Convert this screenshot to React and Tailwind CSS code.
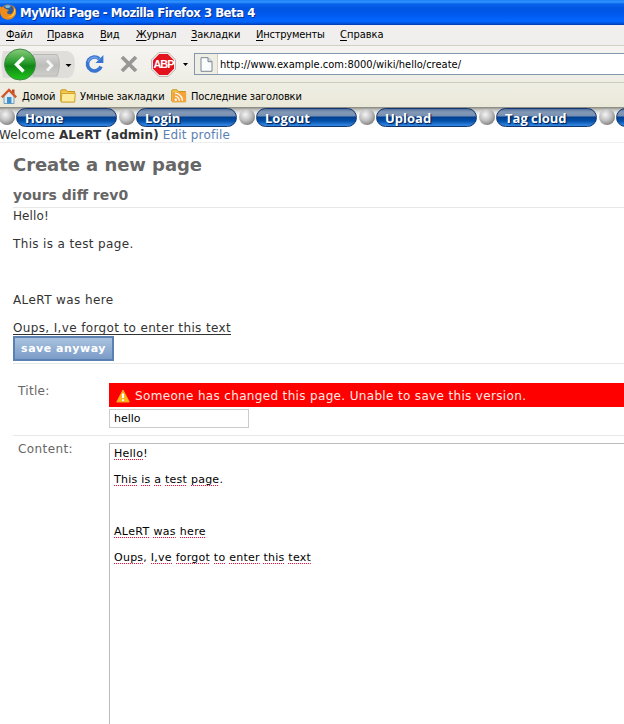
import React from "react";

const menu = [
  ["Ф", "айл", "w-[41px] tracking-[-0.2px]"],
  ["П", "равка", "w-[53px] tracking-[-0.1px]"],
  ["В", "ид", "w-[36px] tracking-[-0.2px]"],
  ["Ж", "урнал", "w-[55px] tracking-[-0.2px]"],
  ["З", "акладки", "w-[65px] tracking-[-0.1px]"],
  ["И", "нструменты", "w-[84px] tracking-[-0.2px]"],
  ["С", "правка", "w-[60px] tracking-[0px]"],
];

const tabs = ["Home", "Login", "Logout", "Upload", "Tag cloud", ""];

function FirefoxIcon() {
  return (
    <svg className="h-[18px] w-[17px] shrink-0" viewBox="0 0 17 18">
      <circle cx="8" cy="9" r="7.6" fill="#e87511" />
      <circle cx="8.3" cy="7.2" r="5.4" fill="#2a5c9e" />
      <path d="M5 3 Q8 1 11 3 L9 5 L6 5Z" fill="#75bde0" />
      <path d="M0 3 Q1 5 3 4 L6 6 L9 7 L7 9 Q7 12 11 11 Q14 9 14 5 L12 2 Q17 5 16 11 Q13 17 7 16.5 Q0 15 0 8Z" fill="#ee8c1b" />
      <path d="M14 5 Q16 8 14 12 Q11 15 7 14 Q12 14 14 9Z" fill="#ffd34e" />
    </svg>
  );
}

function BackForward() {
  return (
    <svg className="h-[34px] w-[76px] shrink-0" viewBox="0 0 76 34">
      <defs>
        <linearGradient id="back" x1="0" y1="0" x2="0" y2="1">
          <stop offset="0" stopColor="#8acb7c" />
          <stop offset=".42" stopColor="#2d9f30" />
          <stop offset=".55" stopColor="#118516" />
          <stop offset="1" stopColor="#20c71b" />
        </linearGradient>
        <linearGradient id="fwd" x1="0" y1="0" x2="0" y2="1">
          <stop offset="0" stopColor="#d6d6d4" />
          <stop offset=".5" stopColor="#bdbdbb" />
          <stop offset="1" stopColor="#cececb" />
        </linearGradient>
      </defs>
      <path d="M3 4 H67 Q75 5 75 17 Q75 29 68 31 H3 Q0 17 3 4Z" fill="#dfdedb" />
      <path d="M33 7.5 H57 Q62 17 57 29 H33Z" fill="url(#fwd)" stroke="#b8b8b6" />
      <circle cx="20" cy="17.5" r="15.5" fill="url(#back)" stroke="#43894a" />
      <path d="M23.5 10.5 L16.5 17.5 L23.5 24.5" fill="none" stroke="#fff" strokeWidth="3.4" />
      <path d="M47 13.5 L51.8 18.5 L47 23.5" fill="none" stroke="#f6f6f6" strokeWidth="2.8" />
      <path d="M65.5 17 H71.5 L68.5 20Z" fill="#000" />
    </svg>
  );
}

function ReloadIcon() {
  return (
    <svg className="h-[20px] w-[20px] shrink-0" viewBox="0 0 20 20">
      <path d="M14.2 4.8 A7 7 0 1 0 16 12.5" fill="none" stroke="#3a75d2" strokeWidth="3.6" />
      <path d="M18.4 1 V9 H10.5Z" fill="#3a75d2" />
      <path d="M13 4.4 A6.6 6.6 0 0 0 3 8" fill="none" stroke="#6ea3ec" strokeWidth="1.3" />
    </svg>
  );
}

function StopIcon() {
  return (
    <svg className="h-[18px] w-[18px] shrink-0" viewBox="0 0 18 18">
      <path d="M2 2 L16 16 M16 2 L2 16" stroke="#979795" strokeWidth="3.8" />
    </svg>
  );
}

function AbpIcon() {
  return (
    <span className="grid h-[25px] w-[25px] shrink-0 place-items-center">
      <svg className="col-start-1 row-start-1 h-[25px] w-[25px]" viewBox="0 0 25 25">
        <path d="M7.7 .7 H17.3 L24.3 7.7 V17.3 L17.3 24.3 H7.7 L.7 17.3 V7.7Z" fill="#fff" stroke="#b4a4a4" />
        <path d="M8.2 2 H16.8 L23 8.2 V16.8 L16.8 23 H8.2 L2 16.8 V8.2Z" fill="#e3131d" />
      </svg>
      <span className="col-start-1 row-start-1 font-['Liberation_Sans',sans-serif] text-[11px] leading-none font-bold tracking-[-1px] text-white">ABP</span>
    </span>
  );
}

function PageIcon() {
  return (
    <svg className="h-[15px] w-[13px]" viewBox="0 0 13 15">
      <path d="M1 .7 H8 L12 4.7 V14.3 H1Z" fill="#fbfcfd" stroke="#7c8791" />
      <path d="M8 .7 V4.7 H12" fill="#d6dde3" stroke="#7c8791" />
    </svg>
  );
}

function HouseIcon() {
  return (
    <svg className="h-[16px] w-[16px] shrink-0" viewBox="0 0 16 16">
      <path d="M3 8 L8 3 L13 8 V15.5 H3Z" fill="#dcebf6" stroke="#75a0bd" />
      <path d="M11 1.5 H13.5 V6 H11Z" fill="#b94d24" />
      <path d="M.8 9.3 L8 2 L15.2 9.3" fill="none" stroke="#d4582b" strokeWidth="2.4" />
      <path d="M6 9 H10.4 V15.5 H6Z" fill="#3e91cc" />
    </svg>
  );
}

function FolderIcon({ feed }) {
  return (
    <svg className="h-[14px] w-[16px] shrink-0" viewBox="0 0 16 14">
      <path d="M.7 12 V1.6 Q.7 .8 2 .8 H6 L7.5 2.5 H14.6 V12.8 H1.5Z" fill="#f3c64c" stroke="#c6981f" />
      {feed ? (
        <g>
          <path d="M1.5 3 H15 V13 H1.5Z" fill="#f6a43a" />
          <circle cx="4.8" cy="10.8" r="1.2" fill="#fff" />
          <path d="M4 7.2 A4.5 4.5 0 0 1 8.4 11.8 M4 4.2 A7.5 7.5 0 0 1 11.4 11.8" fill="none" stroke="#fff" strokeWidth="1.3" />
        </g>
      ) : (
        <path d="M1.8 4.5 H15.3 L14.5 13 H1.2Z" fill="#fdec9c" stroke="#d2a42e" />
      )}
    </svg>
  );
}

function WarningIcon() {
  return (
    <svg className="h-[14px] w-[14px] shrink-0" viewBox="0 0 14 14">
      <path d="M7 1 L13.3 13 H.7Z" fill="#ffb51c" stroke="#f9a51a" strokeLinejoin="round" />
      <path d="M6 4.5 H8 V9 H6Z M6 10.3 H8 V12 H6Z" fill="#fff" />
    </svg>
  );
}

function Misspelled({ text }) {
  return text.split(" ").map((word, i) => {
    const bare = word.replace(/[.,!]$/, "");
    return (
      <React.Fragment key={i}>
        {i > 0 && " "}
        <span className="bg-[repeating-linear-gradient(90deg,#d81b45_0px,#d81b45_1px,#fbe3e8_1px,#fbe3e8_2px)] bg-[length:100%_1px] bg-bottom bg-no-repeat">{bare}</span>
        {word.slice(bare.length)}
      </React.Fragment>
    );
  });
}

export default function App() {
  return (
    <div className="flex h-[724px] w-[624px] flex-col overflow-hidden bg-white whitespace-nowrap">
      <header className="flex shrink-0 flex-col font-['DejaVu_Sans_Condensed','DejaVu_Sans',sans-serif] text-[11px] text-black">
        <div className="flex h-[25px] items-center gap-[3px] bg-[linear-gradient(180deg,#1c7ef6_0px,#3395ff_2px,#0a62ea_4px,#0054e2_9px,#005cf2_16px,#0267ff_21px,#0058e4_23px,#0038b0_25px)] pb-[1px]">
          <FirefoxIcon />
          <span className="text-[13px] leading-none font-bold tracking-[-0.48px] text-white [text-shadow:1px_1px_0_#0a2f8a]">MyWiki Page - Mozilla Firefox 3 Beta 4</span>
        </div>
        <nav className="flex h-[21px] items-center border-b border-[#d2cfc3] bg-[#f0efee] pt-[1px] pl-[6px]">
          {menu.map(([key, rest, cls]) => (
            <span key={key} className={cls}>
              <span className="underline underline-offset-2">{key}</span>
              {rest}
            </span>
          ))}
        </nav>
        <div className="flex h-[37px] items-center border-b border-[#cfccbd] bg-[linear-gradient(180deg,#f5f4f2,#eeede4)]">
          <BackForward />
          <span className="w-[9px]" />
          <ReloadIcon />
          <span className="w-[15px]" />
          <StopIcon />
          <span className="w-[13px]" />
          <AbpIcon />
          <span className="w-[7px]" />
          <svg className="h-[3px] w-[5px]" viewBox="0 0 5 3"><path d="M0 0 H5 L2.5 3Z" /></svg>
          <span className="w-[6px]" />
          <div className="flex h-[22px] flex-1 items-center border-y border-l border-[#8397ad] bg-white">
            <span className="flex h-[20px] w-[23px] items-center justify-center border-r border-[#d4d0bd] bg-[#efeee4]"><PageIcon /></span>
            <span className="pt-[2px] pl-[2px] text-[11px] tracking-[0.02px]">http://www.example.com:8000/wiki/hello/create/</span>
          </div>
        </div>
        <div className="flex h-[24px] items-center bg-[linear-gradient(180deg,#efeee4,#eae8d8)] pt-[3px]">
          <span className="w-[1px]" />
          <span className="pb-[2px]"><HouseIcon /></span>
          <span className="w-[43px] pt-[1px] pl-[5px] tracking-[-0.1px]">Домой</span>
          <span className="pb-[2px]"><FolderIcon /></span>
          <span className="w-[95px] pt-[1px] pl-[4px] tracking-[-0.1px]">Умные закладки</span>
          <span className="pb-[2px]"><FolderIcon feed /></span>
          <span className="pt-[1px] pl-[4px] tracking-[-0.15px]">Последние заголовки</span>
        </div>
      </header>

      <nav className="flex h-[20px] shrink-0 overflow-hidden bg-[linear-gradient(180deg,#85857c,#c8c8c4_3px,#fff_8px)]">
        {tabs.map((label, i) => (
          <div key={i} className={i === 0 ? "flex w-[119px] shrink-0 items-center" : "flex w-[120px] shrink-0 items-center"}>
            <span className={i === 0 ? "-ml-[1px] h-[16px] w-[16px] shrink-0 rounded-full bg-[radial-gradient(circle_at_40%_35%,#f4f4f4,#bdbdbd_45%,#858585_75%)]" : "h-[16px] w-[16px] shrink-0 rounded-full bg-[radial-gradient(circle_at_40%_35%,#f4f4f4,#bdbdbd_45%,#858585_75%)]"} />
            <span className="ml-[1px] flex h-[19px] w-[101px] shrink-0 items-center rounded-full border border-[#12356f] bg-[linear-gradient(180deg,#54719c_0px,#8398b5_3px,#7890b2_7px,#003f91_8px,#0550a8_12px,#2c80dc_16px,#3990ee_18px)] pt-[2px] pl-[8px] font-['Open_Sans','Noto_Sans',sans-serif] text-[13px] leading-none font-bold text-white [text-shadow:1px_1px_1px_#001b4c]">{label}</span>
          </div>
        ))}
      </nav>

      <main className="flex flex-1 flex-col font-['DejaVu_Sans',Verdana,sans-serif] text-[12px] text-[#333]">
        <div className="-ml-[1px] flex h-[16px] shrink-0 items-center gap-[4px] border-b border-[#eee] pt-[1px]">
          <span className="tracking-[0.15px]">Welcome</span>
          <b className="tracking-[0.06px]">ALeRT (admin)</b>
          <span className="tracking-[0.2px] text-[#5b80b2]">Edit profile</span>
        </div>
        <div className="flex flex-1 flex-col pl-[13px]">
          <h1 className="flex h-[42px] items-center pt-[2px] text-[18px] leading-none font-bold tracking-[-0.06px] text-[#666]">Create a new page</h1>
          <h2 className="flex h-[23px] items-start border-b border-[#e8e8e8] pt-[3px] text-[14px] leading-none font-bold text-[#666]">yours diff rev0</h2>
          <p className="mt-px h-[28px] leading-[14px] tracking-[0.1px]">Hello!</p>
          <p className="h-[56px] leading-[14px] tracking-[0.35px]">This is a test page.</p>
          <p className="h-[28px] leading-[14px] tracking-[0.4px]">ALeRT was here</p>
          <p className="h-[15px] leading-[14px] tracking-[0.36px] underline underline-offset-2">Oups, I,ve forgot to enter this text</p>
          <button className="h-[25px] w-[101px] border-2 border-[#5b80b2] bg-[linear-gradient(180deg,#a9c2df,#7b9cc8)] text-[11px] leading-none font-bold tracking-[0.5px] text-white">save anyway</button>
          <div className="mt-[2px] flex h-[72px] border-t border-[#e8e8e8] pt-[19px]">
            <label className="w-[96px] pt-[1px] pl-[5px] leading-[14px] tracking-[0.3px] text-[#666]">Title:</label>
            <div className="flex flex-1 flex-col">
              <div className="flex h-[24px] shrink-0 items-center gap-[5px] bg-[#f00] pt-[1px] pl-[7px] text-[#ffe9e0]">
                <WarningIcon />
                <span className="tracking-[0.34px]">Someone has changed this page. Unable to save this version.</span>
              </div>
              <div className="mt-[2px] flex h-[19px] w-[140px] shrink-0 items-center border border-[#ccc] pt-[2px] pl-[4px] text-[11px] text-black">hello</div>
            </div>
          </div>
          <div className="flex flex-1 border-t border-[#e8e8e8] pt-[7px]">
            <label className="w-[96px] pl-[5px] leading-[12px] tracking-[0.4px] text-[#666]">Content:</label>
            <div className="flex flex-1 flex-col border-t border-l border-[#bbb] pt-[3px] pl-[4px] text-[11px] leading-[13px] tracking-[0.25px] text-black">
              <p className="h-[26px]"><Misspelled text="Hello!" /></p>
              <p className="h-[52px]"><Misspelled text="This is a test page." /></p>
              <p className="h-[26px] tracking-[0.35px]"><Misspelled text="ALeRT was here" /></p>
              <p className="h-[26px]"><Misspelled text="Oups, I,ve forgot to enter this text" /></p>
            </div>
          </div>
        </div>
      </main>
    </div>
  );
}
